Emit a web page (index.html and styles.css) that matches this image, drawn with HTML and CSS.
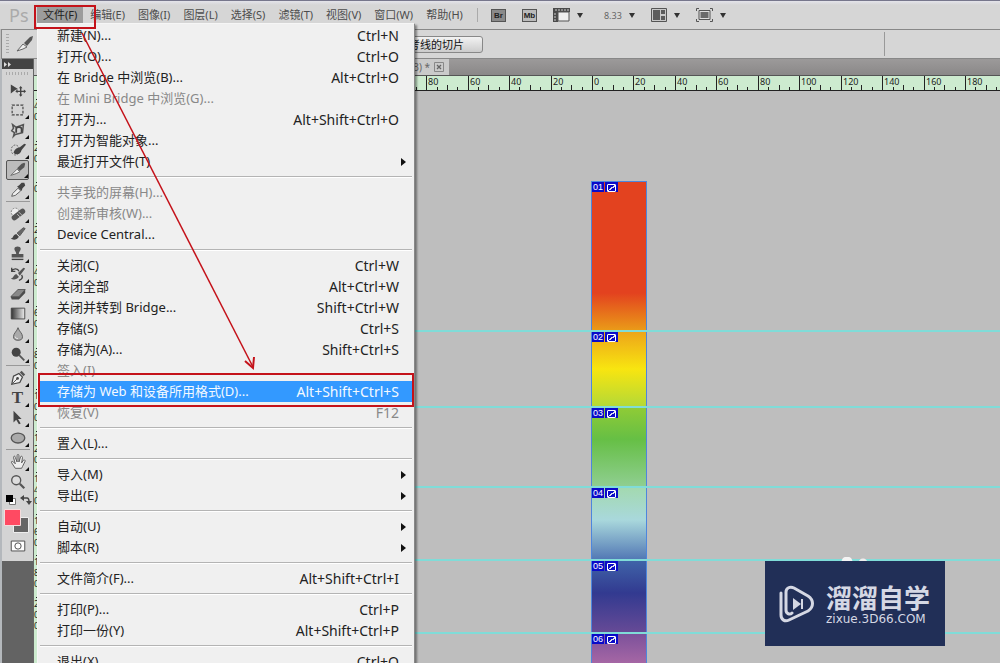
FILE: index.html
```html
<!DOCTYPE html>
<html lang="zh-CN">
<head>
<meta charset="utf-8">
<title>Photoshop</title>
<link rel="stylesheet" href="styles.css">
</head>
<body>
<header class="menubar">
  <span class="brand">Ps</span>
  <nav class="menus">
    <button class="menu-title open">文件(F)</button>
    <button class="menu-title">编辑(E)</button>
    <button class="menu-title">图像(I)</button>
    <button class="menu-title">图层(L)</button>
    <button class="menu-title">选择(S)</button>
    <button class="menu-title">滤镜(T)</button>
    <button class="menu-title">视图(V)</button>
    <button class="menu-title">窗口(W)</button>
    <button class="menu-title">帮助(H)</button>
  </nav>
  <div class="app-buttons">
    <button class="badge-button dark">Br</button>
    <button class="badge-button">Mb</button>
    <button class="drop" aria-label="查看额外内容"><svg width="17" height="14" viewBox="0 0 17 14"><path d="M0 0h17v4H0zM0 4h5v10H0z" fill="#4a4a4a"/><path d="M5 4h11v9H5z" fill="#eee" stroke="#555"/><path d="M3 1v2M6 1v2M9 1v2M12 1v2M15 1v2M1 6h2M1 9h2M1 12h2" stroke="#ccc"/></svg></button>
    <button class="drop zoom-level">8.33</button>
    <button class="drop" aria-label="排列文档"><svg width="16" height="14" viewBox="0 0 16 14"><path d="M.5.5h15v13H.5z" fill="#c9c9c9" stroke="#555"/><path d="M2 2h7v10H2zM10 2h4v4h-4zM10 8h4v4h-4z" fill="#5c5c5c"/></svg></button>
    <button class="drop" aria-label="屏幕模式"><svg width="17" height="14" viewBox="0 0 17 14"><path d="M.5 3V.5H3M14 .5h2.500V3M.5 11v2.500H3M14 13.500h2.500V11" fill="none" stroke="#555"/><path d="M3 2.500h11v9H3z" fill="#ddd" stroke="#555"/><path d="M4.500 4h8v6h-8z" fill="#6a6a6a"/></svg></button>
  </div>
</header>

<section class="options">
  <span class="grip-v"></span>
  <svg class="option-icon" width="20" height="20" viewBox="0 0 20 20"><path d="M2 17l6-7 4 3-4 2z" fill="#eee" stroke="#666"/><path d="M9 9l6-6 3-1-1 4-5 6z" fill="#555"/></svg>
  <button class="option-button">考线的切片</button>
  <span class="option-rule"></span>
</section>

<main class="workspace">
  <aside class="toolbox">
    <div class="toolbox-head"><svg width="8" height="5" viewBox="0 0 8 5"><path d="M0 0l3 2.500L0 5zM4 0l3 2.500L4 5z" fill="#ddd"/></svg></div>
    <div class="toolbox-body">
      <span class="grip-h"></span>
      <button class="tool" aria-label="移动"><svg viewBox="0 0 20 20"><path d="M2 4l8 5-3 1-5 4z" fill="#444"/><path d="M13 7v9M8.500 11.500h9" stroke="#444" stroke-width="1.500"/><path d="M13 5.500l2 2.500h-4zM13 17.500l2-2.500h-4zM7 11.500l2.500-2v4zM19 11.500l-2.500-2v4z" fill="#444"/></svg></button>
      <button class="tool more" aria-label="选框"><svg viewBox="0 0 20 20"><path d="M3.500 4.500h12v11h-12z" fill="none" stroke="#444" stroke-width="1.300" stroke-dasharray="3 1.600"/></svg></button>
      <button class="tool more" aria-label="套索"><svg viewBox="0 0 20 20"><path d="M4 4l4 3 8-3-1 9-8 2-2 2 1-4-3-2 2-3z" fill="none" stroke="#555" stroke-width="1.700"/><path d="M8 9c0-3 6-3 6 0v4M8 9v4" fill="none" stroke="#444" stroke-width="2"/></svg></button>
      <button class="tool more" aria-label="快速选择"><svg viewBox="0 0 20 20"><ellipse cx="7" cy="10" rx="4.500" ry="5.500" fill="none" stroke="#555" stroke-dasharray="2 1.500"/><path d="M5 13c2-5 4-5 7-6l5-4 2 1-5 6c-1 5-6 6-9 3z" fill="#444"/></svg></button>
      <button class="tool more active" aria-label="切片"><svg viewBox="0 0 20 20"><path d="M2 16l7-7 3 3-4 2z" fill="#eee" stroke="#666"/><path d="M9 8l5-5 3-1 1 1-1 4-5 4z" fill="#555"/></svg></button>
      <button class="tool more" aria-label="吸管"><svg viewBox="0 0 20 20"><path d="M3 17l1-3 6-6 3 3-6 5z" fill="#eee" stroke="#555"/><path d="M9 6l2-1 3-3 3 0 1 3-3 3-1 3z" fill="#444"/></svg></button>
      <hr class="tool-rule">
      <button class="tool more" aria-label="修复画笔"><svg viewBox="0 0 20 20"><circle cx="7" cy="8" r="4.500" fill="#eee" stroke="#777" stroke-dasharray="2 1.500"/><path d="M6 14l9-7" stroke="#555" stroke-width="6" stroke-linecap="round"/><path d="M9 10l3 3M11 8l3 3" stroke="#ccc"/></svg></button>
      <button class="tool more" aria-label="画笔"><svg viewBox="0 0 20 20"><path d="M2 15c3 0 2-4 6-5l3 3c-2 4-7 4-9 2z" fill="#444"/><path d="M9 9l7-6 2 1-6 8z" fill="#666" stroke="#555"/></svg></button>
      <button class="tool more" aria-label="仿制图章"><svg viewBox="0 0 20 20"><path d="M8 10c0-3-2-3-2-6s7-3 7 0-2 3-2 6h5v4H3v-4z" fill="#555"/><path d="M3 16h13" stroke="#444" stroke-width="1.500"/></svg></button>
      <button class="tool more" aria-label="历史记录画笔"><svg viewBox="0 0 20 20"><path d="M2 15c3 0 3-4 6-5l3 3c-2 3-6 4-9 2zM10 9l6-6 2 1-6 8z" fill="#555"/><path d="M3 7c2-4 7-3 8 0M3 3v4h4M14 11c2 3 0 5-3 6" fill="none" stroke="#444" stroke-width="1.500"/></svg></button>
      <button class="tool more" aria-label="橡皮擦"><svg viewBox="0 0 20 20"><path d="M2 13l8-8h8l-7 8z" fill="#888" stroke="#555"/><path d="M2 13h9v3H3zM11 13l7-8v4l-7 7z" fill="#4c4c4c"/></svg></button>
      <button class="tool more" aria-label="渐变"><svg viewBox="0 0 20 20"><defs><linearGradient id="ramp"><stop stop-color="#333"/><stop offset="1" stop-color="#eee"/></linearGradient></defs><path d="M2.500 3.500h15v12h-15z" fill="url(#ramp)" stroke="#444"/></svg></button>
      <button class="tool more" aria-label="模糊"><svg viewBox="0 0 20 20"><path d="M10 3c1 4 5 6 5 10a5 4 0 0 1-10 0c0-4 4-6 5-10z" fill="#aaa" stroke="#555"/><path d="M7 13c0 2 2 2 3 2" stroke="#eee" fill="none"/></svg></button>
      <button class="tool more" aria-label="减淡"><svg viewBox="0 0 20 20"><circle cx="8" cy="8" r="5" fill="#444"/><path d="M11 11l6 6" stroke="#555" stroke-width="2"/></svg></button>
      <hr class="tool-rule">
      <button class="tool more" aria-label="钢笔"><svg viewBox="0 0 20 20"><path d="M3 17l2-9 6-3 4 4-3 6z" fill="#eee" stroke="#444" stroke-width="1.300"/><path d="M4 16l5-5" stroke="#444"/><circle cx="9.500" cy="10.500" r="1.500" fill="#444"/><path d="M12 4l4 4 2-2-4-4z" fill="#555"/></svg></button>
      <button class="tool more type" aria-label="文字">T</button>
      <button class="tool more" aria-label="路径选择"><svg viewBox="0 0 20 20"><path d="M5 2l9 9-4 0 3 5-2 1-3-5-3 3z" fill="#444"/></svg></button>
      <button class="tool more" aria-label="椭圆"><svg viewBox="0 0 20 20"><ellipse cx="10" cy="10" rx="7.500" ry="5.500" fill="#aaa" stroke="#555" stroke-width="1.500"/></svg></button>
      <hr class="tool-rule">
      <button class="tool more" aria-label="抓手"><svg viewBox="0 0 20 20"><path d="M7 17l-4-6c-1-2 1-2 2-1l2 2-2-7c0-2 2-2 2 0l2 5V3c0-2 2-2 2 0v7l2-6c1-1 2 0 2 1l-1 6 2-3c1-1 2 0 2 1l-3 6-1 2z" fill="#eee" stroke="#555"/></svg></button>
      <button class="tool" aria-label="缩放"><svg viewBox="0 0 20 20"><circle cx="8" cy="8" r="5" fill="#ddd" stroke="#555" stroke-width="1.500"/><path d="M12 12l5 5" stroke="#555" stroke-width="2.500"/></svg></button>
      <svg class="mini" width="28" height="16" viewBox="0 0 28 16"><path d="M5.500 6.500h6v6h-6z" fill="#fff" stroke="#777"/><path d="M2 3h7v7H2z" fill="#000"/><path d="M19 6h4c2 0 2 2 2 4" fill="none" stroke="#444" stroke-width="1.500"/><path d="M20 3v6l-4-3zM22 9h6l-3 4z" fill="#444"/></svg>
      <svg class="swatches" width="28" height="28" viewBox="0 0 28 28"><path d="M9.500 9.500h15v15h-15z" fill="#666" stroke="#eee"/><path d="M.5 1.500h16v16H.5z" fill="#ff4a62" stroke="#f3dcdc"/></svg>
      <button class="tool mask" aria-label="快速蒙版"><svg viewBox="0 0 20 20"><path d="M2.500 4.500h15v11h-15z" fill="#fff" stroke="#444"/><circle cx="10" cy="10" r="3.500" fill="#fff" stroke="#444"/></svg></button>
    </div>
  </aside>

  <section class="document">
    <div class="tabs"><div class="tab">3) * <button class="tab-close" aria-label="关闭"><svg width="10" height="10" viewBox="0 0 10 10"><path d="M.5.5h9v9h-9z" fill="none" stroke="#888"/><path d="M3 3l4 4M7 3l-4 4" stroke="#666" stroke-width="1.300"/></svg></button></div></div>
    <svg class="ruler-h" id="ruler-h"></svg>
    <div class="view">
      <svg class="ruler-v" id="ruler-v"></svg>
      <div class="canvas">
        <div class="band first"><div class="slice s1"><span class="num">01</span><span class="kind"></span></div></div>
        <div class="band b2"><div class="slice s2"><span class="num">02</span><span class="kind"></span></div></div>
        <div class="band b3"><div class="slice s3"><span class="num">03</span><span class="kind"></span></div></div>
        <div class="band b4"><div class="slice s4"><span class="num">04</span><span class="kind"></span></div></div>
        <div class="band b5"><div class="slice s5"><span class="num">05</span><span class="kind"></span></div></div>
        <div class="band b6"><div class="slice s6"><span class="num">06</span><span class="kind"></span></div></div>
      </div>
    </div>
  </section>
</main>

<div class="menu" role="menu">
  <button class="item">新建(N)...<kbd>Ctrl+N</kbd></button>
  <button class="item">打开(O)...<kbd>Ctrl+O</kbd></button>
  <button class="item">在 Bridge 中浏览(B)...<kbd>Alt+Ctrl+O</kbd></button>
  <button class="item" disabled>在 Mini Bridge 中浏览(G)...</button>
  <button class="item">打开为...<kbd>Alt+Shift+Ctrl+O</kbd></button>
  <button class="item">打开为智能对象...</button>
  <button class="item sub">最近打开文件(T)</button>
  <hr>
  <button class="item" disabled>共享我的屏幕(H)...</button>
  <button class="item" disabled>创建新审核(W)...</button>
  <button class="item">Device Central...</button>
  <hr>
  <button class="item">关闭(C)<kbd>Ctrl+W</kbd></button>
  <button class="item">关闭全部<kbd>Alt+Ctrl+W</kbd></button>
  <button class="item">关闭并转到 Bridge...<kbd>Shift+Ctrl+W</kbd></button>
  <button class="item">存储(S)<kbd>Ctrl+S</kbd></button>
  <button class="item">存储为(A)...<kbd>Shift+Ctrl+S</kbd></button>
  <button class="item" disabled>签入(I)</button>
  <button class="item selected">存储为 Web 和设备所用格式(D)...<kbd>Alt+Shift+Ctrl+S</kbd></button>
  <button class="item" disabled>恢复(V)<kbd>F12</kbd></button>
  <hr>
  <button class="item">置入(L)...</button>
  <hr>
  <button class="item sub">导入(M)</button>
  <button class="item sub">导出(E)</button>
  <hr>
  <button class="item sub">自动(U)</button>
  <button class="item sub">脚本(R)</button>
  <hr>
  <button class="item">文件简介(F)...<kbd>Alt+Shift+Ctrl+I</kbd></button>
  <hr>
  <button class="item">打印(P)...<kbd>Ctrl+P</kbd></button>
  <button class="item">打印一份(Y)<kbd>Alt+Shift+Ctrl+P</kbd></button>
  <hr>
  <button class="item">退出(X)<kbd>Ctrl+Q</kbd></button>
</div>

<svg class="marks" width="420" height="410" viewBox="0 0 420 410">
  <g fill="none" stroke="#c4121a" stroke-width="2"><path d="M35 6h60v22H35zM39 374h374v32H39z"/><path d="M82 33L253 367" stroke-width="1.500"/><path d="M245 361l8 7 1-11"/></g>
</svg>

<div class="watermark">
  <svg class="logo" width="36" height="38" viewBox="0 0 36 38"><g fill="none" stroke="#d5d8e4" stroke-width="3" stroke-linecap="round" stroke-linejoin="round"><path d="M2 8v22c0 5 4 7 8 5l19-9c6-4 6-11 0-15L15 3C11 1 7 3 7 7v18c0 4 4 5 6 3"/></g><path d="M14 13l8 6-8 6z" fill="#d5d8e4"/><path d="M23 14v10" stroke="#d5d8e4" stroke-width="2"/></svg>
  <div class="words"><strong>溜溜自学</strong><span>zixue.3D66.COM</span></div>
</div>
<script src="rulers.js"></script>
</body>
</html>
```
FILE: rulers.js
```js
// Draws the ticks and numbers of the two document rulers.
const NS = "http://www.w3.org/2000/svg";
const STEP = 41.45;

function add(svg, name, attrs, text) {
  const el = document.createElementNS(NS, name);
  for (const key in attrs) el.setAttribute(key, attrs[key]);
  if (text) el.textContent = text;
  svg.appendChild(el);
}

function tickLength(quarter) {
  return quarter === 0 ? 14 : quarter === 2 ? 5 : 3;
}

const across = document.getElementById("ruler-h");
const width = across.clientWidth;
for (let i = -17; 558 + (i * STEP) / 4 < width; i++) {
  const x = Math.round(558 + (i * STEP) / 4);
  const q = ((i % 4) + 4) % 4;
  add(across, "rect", { x, y: 14 - tickLength(q), width: 1, height: tickLength(q) });
  if (q === 0) add(across, "text", { x: x + 2, y: 9 }, String(Math.abs(i / 4) * 20));
}

const down = document.getElementById("ruler-v");
const height = down.clientHeight;
for (let i = -8; 91 + (i * STEP) / 4 < height - 36; i++) {
  const y = Math.round(91 + (i * STEP) / 4);
  const q = ((i % 4) + 4) % 4;
  add(down, "rect", { x: 16 - tickLength(q), y, width: tickLength(q), height: 1 });
  if (q === 0) {
    String(Math.abs(i / 4) * 20).split("").forEach((d, n) => {
      add(down, "text", { x: 0, y: y + 10 + n * 11 }, d);
    });
  }
}
```
FILE: styles.css
```css
* { box-sizing: border-box; }

body {
  margin: 0;
  height: 100vh;
  display: flex;
  flex-direction: column;
  overflow: hidden;
  position: relative;
  background: #bebebe;
  color: #222;
  font-family: "Noto Sans", "Noto Sans CJK SC", sans-serif;
}

button {
  margin: 0;
  padding: 0;
  border: 0;
  background: none;
  color: inherit;
  font: inherit;
}

/* Application bar */
.menubar {
  flex: none;
  height: 29px;
  display: flex;
  align-items: center;
  padding-left: 9px;
  border-top: 1px solid #77778c;
  background: linear-gradient(#e4e4ea, #d6d6d6 4px);
}

.brand {
  width: 28px;
  color: #aaa;
  font-size: 18px;
  line-height: 28px;
}

.menus {
  display: flex;
  gap: 1px;
}

.menu-title {
  padding: 0 6px;
  height: 16px;
  color: #4c4c4c;
  font-size: 11px;
  line-height: 16px;
  white-space: nowrap;
}

.menu-title.open { background: #9c9c9c; color: #222; }

.app-buttons {
  display: flex;
  align-items: center;
  gap: 16px;
  margin-left: 8px;
  padding-left: 13px;
  border-left: 1px solid #aaa;
}

.badge-button {
  width: 15px;
  height: 13px;
  border: 1px solid #555;
  background: #bbb;
  color: #222;
  font: bold 8px/11px "Liberation Sans", sans-serif;
}

.badge-button.dark { background: #8a8a8a; }

.drop {
  display: flex;
  align-items: center;
  gap: 7px;
}

.drop::after {
  content: "";
  border: 3px solid transparent;
  border-top: 5px solid #333;
  border-bottom: 0;
}

.zoom-level {
  margin: 0 0 0 5px;
  color: #666;
  font-size: 9px;
}

/* Tool options */
.options {
  flex: none;
  height: 30px;
  display: flex;
  align-items: center;
  margin-left: 1px;
  padding-left: 4px;
  border: 1px solid #888;
  border-right: 0;
  background: #d6d6d6;
}

.grip-v {
  width: 3px;
  height: 20px;
  background: repeating-linear-gradient(#aaa 0 1px, #d6d6d6 1px 3px);
}

.option-icon { margin-left: 6px; }

.option-button {
  margin-left: 355px;
  padding: 0 18px;
  height: 17px;
  border: 1px solid #888;
  border-radius: 3px;
  background: linear-gradient(#f2f2f2, #ccc);
  color: #111;
  font-size: 11px;
  line-height: 15px;
}

.option-rule {
  margin-left: 401px;
  width: 1px;
  height: 24px;
  background: #999;
}

/* Toolbox */
.workspace {
  flex: 1;
  min-height: 0;
  display: flex;
}

.toolbox {
  flex: none;
  width: 34px;
  border-left: 2px solid #b4b8bc;
  border-right: 1px solid #666;
  background: #636363;
}

.toolbox-head {
  display: flex;
  align-items: center;
  height: 10px;
  padding-left: 2px;
  background: #444;
}

.toolbox-body {
  display: flex;
  flex-direction: column;
  align-items: center;
  padding-bottom: 5px;
  background: #d4d4d4;
}

.grip-h {
  width: 24px;
  height: 3px;
  margin: 3px 0 5px;
  background: repeating-linear-gradient(90deg, #aaa 0 1px, #d4d4d4 1px 3px);
}

.tool {
  position: relative;
  width: 23px;
  height: 20px;
  display: flex;
  align-items: center;
  justify-content: center;
}

.tool svg { width: 18px; height: 18px; }

.tool.more::after {
  content: "";
  position: absolute;
  right: 0;
  bottom: 1px;
  border: 2px solid #111;
  border-top-color: transparent;
  border-left-color: transparent;
}

.tool.active {
  border: 1px solid #555;
  border-radius: 2px;
  background: #bbb;
}

.tool.type {
  color: #444;
  font: bold 17px/20px "Liberation Serif", serif;
}

.tool-rule {
  width: 24px;
  height: 1px;
  margin: 1px 0 2px;
  border: 0;
  background: #999;
}

.mini, .swatches { flex: none; }

/* Document window */
.document {
  flex: 1;
  min-width: 0;
  display: flex;
  flex-direction: column;
}

.tabs {
  flex: none;
  height: 16px;
  background: linear-gradient(#9c9a9a, #8a8888);
}

.tab {
  width: 415px;
  height: 16px;
  display: flex;
  align-items: center;
  justify-content: flex-end;
  gap: 4px;
  padding-right: 5px;
  background: #cacaca;
  color: #666;
  font-size: 10px;
  line-height: 16px;
}

.tab-close { display: flex; }

.ruler-h {
  flex: none;
  width: 100%;
  height: 16px;
  background: #cdebcf;
  border-top: 1px solid #555;
  border-bottom: 1px solid #222;
}

.ruler-h, .ruler-v {
  fill: #222;
  font-size: 9px;
}

.view {
  flex: 1;
  min-height: 0;
  display: flex;
}

.ruler-v {
  flex: none;
  width: 16px;
  height: 100%;
  background: #cdebcf;
}

.canvas {
  flex: 1;
  display: flex;
  flex-direction: column;
  padding-top: 90px;
  overflow: hidden;
}

.band {
  flex: none;
  display: flex;
  padding-left: 541px;
  border-top: 2px solid #80dcd8;
}

.band.first { height: 149px; border-top: 0; }
.b2 { height: 76px; }
.b3 { height: 80px; }
.b4 { height: 73px; }
.b5 { height: 73px; }
.b6 { height: 90px; }

.slice {
  width: 56px;
  display: flex;
  align-items: flex-start;
  gap: 1px;
  border: 1px solid #4d86dd;
  border-top: 0;
  border-bottom: 0;
}

.s1 { border-top: 1px solid #4d86dd; background: linear-gradient(#e3421f 75%, #ea9a18); }
.s2 { background: linear-gradient(#eda51a, #f8e510 50%, #b5d936); }
.s3 { background: linear-gradient(#8fcb36, #66bf45 40%, #8fce90); }
.s4 { background: linear-gradient(#a3d9b0, #a9d8dc 45%, #5379b5); }
.s5 { background: linear-gradient(#3f63a8, #323a90 45%, #664a96); }
.s6 { background: linear-gradient(#7c519b, #a868a5 35%); }

.num, .kind {
  height: 10px;
  background: #0a0ac8;
}

.num {
  width: 12px;
  color: #fff;
  font: 9px/10px "Liberation Sans", sans-serif;
  text-align: center;
}

.kind {
  width: 13px;
  padding: 2px;
}

.kind::before {
  content: "";
  display: block;
  height: 6px;
  border: 1px solid #fff;
  border-radius: 1px;
  background: linear-gradient(145deg, transparent 45%, #dde 45% 60%, transparent 60%);
}

/* File menu */
.menu {
  position: absolute;
  left: 37px;
  top: 23px;
  width: 378px;
  padding: 1px 1px 3px;
  border: 1px solid #f6f6f6;
  border-right-color: #888;
  background: #f0f0f0;
  box-shadow: 2px 2px 2px #0006;
}

.menu hr {
  height: 2px;
  margin: 4px 1px;
  border: 0;
  border-top: 1px solid #b4b4b4;
  background: #fff;
}

.item {
  display: flex;
  align-items: center;
  justify-content: space-between;
  width: 100%;
  height: 21px;
  padding: 0 14px 0 18px;
  font-size: 13px;
  line-height: 21px;
  white-space: nowrap;
}

.item kbd {
  font-family: inherit;
  font-size: 14px;
}

.item:disabled { color: #888; }
.item.selected { background: #3399ff; color: #f4f9ff; }

.item.sub { padding-right: 7px; }

.item.sub::after {
  content: "";
  border: 4px solid transparent;
  border-left: 5px solid #111;
  border-right: 0;
}

/* Annotations over the window */
.marks {
  position: absolute;
  left: 0;
  top: 0;
  pointer-events: none;
}

.watermark {
  position: absolute;
  right: 55px;
  bottom: 17px;
  display: flex;
  align-items: center;
  gap: 11px;
  width: 180px;
  height: 85px;
  padding-left: 14px;
  background: #212f57;
  color: #d5d8e4;
}

.watermark::before {
  content: "";
  position: absolute;
  left: 76px;
  top: -4px;
  width: 28px;
  height: 4px;
  background: radial-gradient(circle at 6px 5px, #f4f4f4 5px, transparent 6px), radial-gradient(circle at 22px 6px, #eee 4px, transparent 5px);
}

.words {
  display: flex;
  flex-direction: column;
}

.words strong {
  font: bold 26px/30px "Noto Sans CJK SC", sans-serif;
}

.words span {
  font: 12px/14px "DejaVu Sans", sans-serif;
}
```
